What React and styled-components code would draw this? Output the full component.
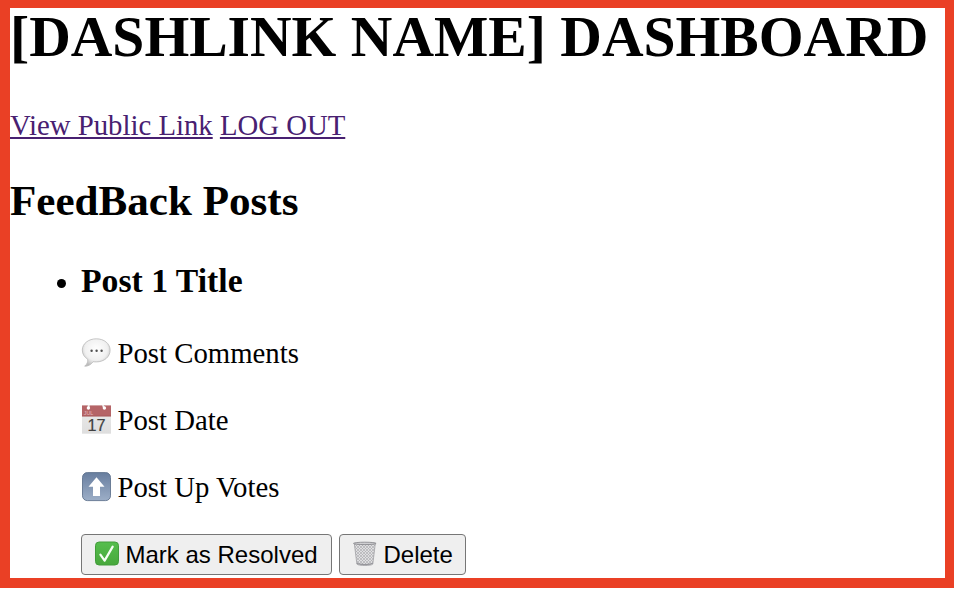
import React from "react";
import styled, { createGlobalStyle } from "styled-components";

const GlobalStyle = createGlobalStyle`
  body { margin: 0; background: #fff; }
  *, *::before, *::after { box-sizing: border-box; }
`;

const Frame = styled.main`
  width: 954px;
  height: 588px;
  border: solid #ea4025;
  border-width: 8px 9px 10px 10px;
  background: #fff;
  color: #000;
  font: 28.75px/32px "Liberation Serif", "Times New Roman", serif;
  overflow: hidden;
  white-space: nowrap;
`;

const PageTitle = styled.h1`
  margin: 0 0 43px;
  font-size: 57.6px;
  line-height: 58px;
`;

const Links = styled.nav`
  height: 32px;
`;

const Link = styled.a`
  color: #482071;
  text-decoration: underline;
  text-decoration-thickness: 2px;
  text-underline-offset: 2px;
  text-decoration-skip-ink: none;
`;

const SectionTitle = styled.h2`
  margin: 36px 0 37px;
  font-size: 43.1px;
  line-height: 48px;
`;

const PostList = styled.ul`
  margin: 0;
  padding: 0 0 0 71px;
  list-style: none;
`;

const Post = styled.li`
  display: flex;
  flex-direction: column;
`;

const PostTitle = styled.h3`
  display: flex;
  align-items: center;
  margin: 0 0 37px -24px;
  font-size: 33.7px;
  line-height: 38px;

  &::before {
    content: "";
    width: 9px;
    height: 9px;
    margin: 5px 15px 0 0;
    border-radius: 50%;
    background: #000;
  }
`;

const Detail = styled.p`
  display: flex;
  gap: 6.5px;
  margin: 0 0 35px;
`;

const DetailIcon = styled.svg`
  width: 30px;
  height: 32px;
  flex: none;
  margin: 1px 0 -1px;
`;

const Actions = styled.div`
  display: flex;
  gap: 7px;
  margin-top: -4px;
`;

const ActionButton = styled.button`
  display: flex;
  align-items: center;
  width: ${(p) => p.$width}px;
  height: 41px;
  padding: 0 0 1px 12px;
  gap: 5.5px;
  border: 1px solid #767676;
  border-radius: 4px;
  background: #efefef;
  color: #000;
  font: 24px/27px "Liberation Sans", Arial, sans-serif;
  white-space: nowrap;
`;

const ButtonIcon = styled.svg`
  width: 26px;
  height: 27px;
  flex: none;
`;

const CalendarText = styled.text`
  font-family: "Liberation Sans", Arial, sans-serif;
`;

const SpeechIcon = () => (
  <DetailIcon viewBox="0 0 30 32" aria-hidden="true">
    <defs>
      <radialGradient id="bubble" cx=".5" cy=".38" r=".62">
        <stop offset="0" stopColor="#fff" />
        <stop offset=".65" stopColor="#f0f0f0" />
        <stop offset="1" stopColor="#bcbcbc" />
      </radialGradient>
    </defs>
    <path
      d="M15.3 .8C7.6 .8 1.3 5.6 1.3 12c0 4.1 2.2 7.3 5.4 9.2.5 2.6-.7 5-3 7 3.3.1 6.3-1.5 8.4-4.5 1 .2 2.1.2 3.2.2 7.8 0 13.8-5 13.8-11.7C29.1 5.6 23.1.8 15.3.8z"
      fill="url(#bubble)" stroke="#b9b9b9" strokeWidth=".8"
    />
    <g fill="#505050">
      <circle cx="10.6" cy="12.8" r="1.2" />
      <circle cx="15.6" cy="12.8" r="1.2" />
      <circle cx="20.6" cy="12.8" r="1.2" />
    </g>
  </DetailIcon>
);

const CalendarIcon = () => (
  <DetailIcon viewBox="0 0 30 32" aria-hidden="true">
    <defs>
      <linearGradient id="sheet" x2="0" y2="1">
        <stop offset="0" stopColor="#e7e7e7" />
        <stop offset="1" stopColor="#dedede" />
      </linearGradient>
    </defs>
    <path d="M1 11h29v17.7H1z" fill="url(#sheet)" />
    <path d="M1 .4h29v10.9H1z" fill="#b56467" />
    <path d="M1 11h29" stroke="#a15558" strokeWidth=".7" />
    <path d="M7.8 0l-.3 3M21.8 0l1.2 3" stroke="#eee" strokeWidth="1.8" />
    <circle cx="7.4" cy="3" r="1.7" fill="#fff" />
    <circle cx="23.4" cy="3" r="1.7" fill="#fff" />
    <CalendarText x="2.8" y="9.8" fontSize="5.5" fill="#e3bcbe" textLength="9.5" lengthAdjust="spacingAndGlyphs">JUL</CalendarText>
    <CalendarText x="15.5" y="26" fontSize="16.2" fill="#414141" stroke="#414141" strokeWidth=".2" textAnchor="middle">17</CalendarText>
  </DetailIcon>
);

const UpIcon = () => (
  <DetailIcon viewBox="0 0 30 32" aria-hidden="true">
    <defs>
      <linearGradient id="tile" x2="0" y2="1">
        <stop offset="0" stopColor="#687e9f" />
        <stop offset="1" stopColor="#9caec7" />
      </linearGradient>
    </defs>
    <rect x="1.5" y=".6" width="28" height="28" rx="4.8" fill="url(#tile)" stroke="#61748f" strokeWidth=".9" />
    <path d="M15.5 5.2l8 9.6H19v9.1h-7v-9.1H7.5z" fill="#fff" />
  </DetailIcon>
);

const CheckIcon = () => (
  <ButtonIcon viewBox="0 0 26 27" aria-hidden="true">
    <defs>
      <linearGradient id="green" x2="0" y2="1">
        <stop offset="0" stopColor="#56be4d" />
        <stop offset="1" stopColor="#48a83c" />
      </linearGradient>
    </defs>
    <rect x="1.5" y="1" width="23" height="23" rx="3.6" fill="url(#green)" stroke="#429d3b" />
    <path d="M6.4 13.6l4.2 6L18.7 5.6" fill="none" stroke="#f8fff6" strokeWidth="2.2" strokeLinecap="round" strokeLinejoin="round" />
  </ButtonIcon>
);

const TrashIcon = () => (
  <ButtonIcon viewBox="0 0 26 27" aria-hidden="true">
    <defs>
      <pattern id="mesh" width="3" height="3" patternUnits="userSpaceOnUse">
        <path d="M0 0l3 3M3 0L0 3" stroke="#a8a8ab" strokeWidth=".6" />
      </pattern>
    </defs>
    <path d="M2.3 2.5l2.6 20.6c1.5 1.9 14.3 1.9 15.9 0L23.3 2.5z" fill="#dfdfe1" />
    <path d="M2.3 2.5l2.6 20.6c1.5 1.9 14.3 1.9 15.9 0L23.3 2.5z" fill="url(#mesh)" stroke="#a1a1a5" strokeWidth=".8" />
    <path d="M5 22.3c3 1.6 12.8 1.6 15.8 0" fill="none" stroke="#96969b" strokeWidth="1.2" />
    <ellipse cx="12.8" cy="2.4" rx="11.3" ry="1.2" fill="#cfcfd2" stroke="#818187" strokeWidth=".8" />
  </ButtonIcon>
);

export default function App() {
  return (
    <>
      <GlobalStyle />
      <Frame>
        <PageTitle>[DASHLINK NAME] DASHBOARD</PageTitle>
        <Links>
          <Link href="#public">View Public Link</Link>{" "}
          <Link href="#logout">LOG OUT</Link>
        </Links>
        <SectionTitle>FeedBack Posts</SectionTitle>
        <PostList>
          <Post>
            <PostTitle>Post 1 Title</PostTitle>
            <Detail><SpeechIcon />Post Comments</Detail>
            <Detail><CalendarIcon />Post Date</Detail>
            <Detail><UpIcon />Post Up Votes</Detail>
            <Actions>
              <ActionButton $width={251}><CheckIcon />Mark as Resolved</ActionButton>
              <ActionButton $width={127}><TrashIcon />Delete</ActionButton>
            </Actions>
          </Post>
        </PostList>
      </Frame>
    </>
  );
}
